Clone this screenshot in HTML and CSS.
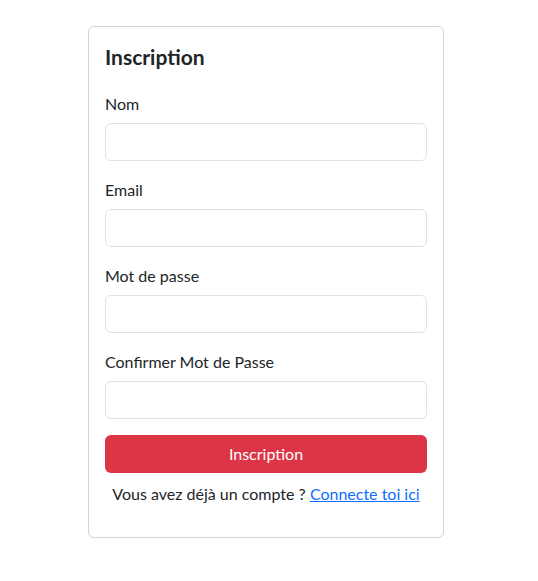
FILE: index.html
```html
<!DOCTYPE html>
<html lang="fr">
<head>
<meta charset="utf-8">
<title>Inscription</title>
<link rel="stylesheet" href="styles.css">
</head>
<body>
<div class="page">
  <div class="card">
    <h4 class="card-title">Inscription</h4>
    <form class="form">
      <div class="group">
        <label class="label" for="nom">Nom</label>
        <input class="input" id="nom" type="text">
      </div>
      <div class="group">
        <label class="label" for="email">Email</label>
        <input class="input" id="email" type="email">
      </div>
      <div class="group">
        <label class="label" for="pw">Mot de passe</label>
        <input class="input" id="pw" type="password">
      </div>
      <div class="group">
        <label class="label" for="pw2">Confirmer Mot de Passe</label>
        <input class="input" id="pw2" type="password">
      </div>
      <button class="btn" type="button">Inscription</button>
      <p class="note">Vous avez déjà un compte ? <a class="link" href="#">Connecte toi ici</a></p>
    </form>
  </div>
</div>
</body>
</html>
```
FILE: styles.css
```css
* { box-sizing: border-box; }
html, body { margin: 0; padding: 0; background: #fff; }
body {
  font-family: "Lato", "Noto Sans", sans-serif;
  font-size: 16px;
  line-height: 24px;
  color: #212529;
}
.page {
  padding: 26px 0 0 88px;
}
.card {
  width: 356px;
  border: 1px solid #d3d3d3;
  border-radius: 6px;
  padding: 18px 16px 0 16px;
}
.card-title {
  margin: 0 0 22px 0;
  font-size: 21px;
  line-height: 24px;
  font-weight: 700;
}
.form { display: flex; flex-direction: column; }
.group { display: flex; flex-direction: column; margin-bottom: 16px; }
.label { padding-top: 1px; margin-bottom: 7px; }
.input {
  height: 38px;
  border: 1px solid #dee2e6;
  border-radius: 6px;
  font: inherit;
  padding: 6px 12px;
}
.btn {
  height: 38px;
  background: #dc3545;
  color: #fff;
  border: 0;
  border-radius: 6px;
  font: inherit;
  padding-top: 1px;
}
.note {
  margin: 9px 0 31px 0;
  text-align: center;
  white-space: nowrap;
}
.link { color: #0d6efd; }
```
